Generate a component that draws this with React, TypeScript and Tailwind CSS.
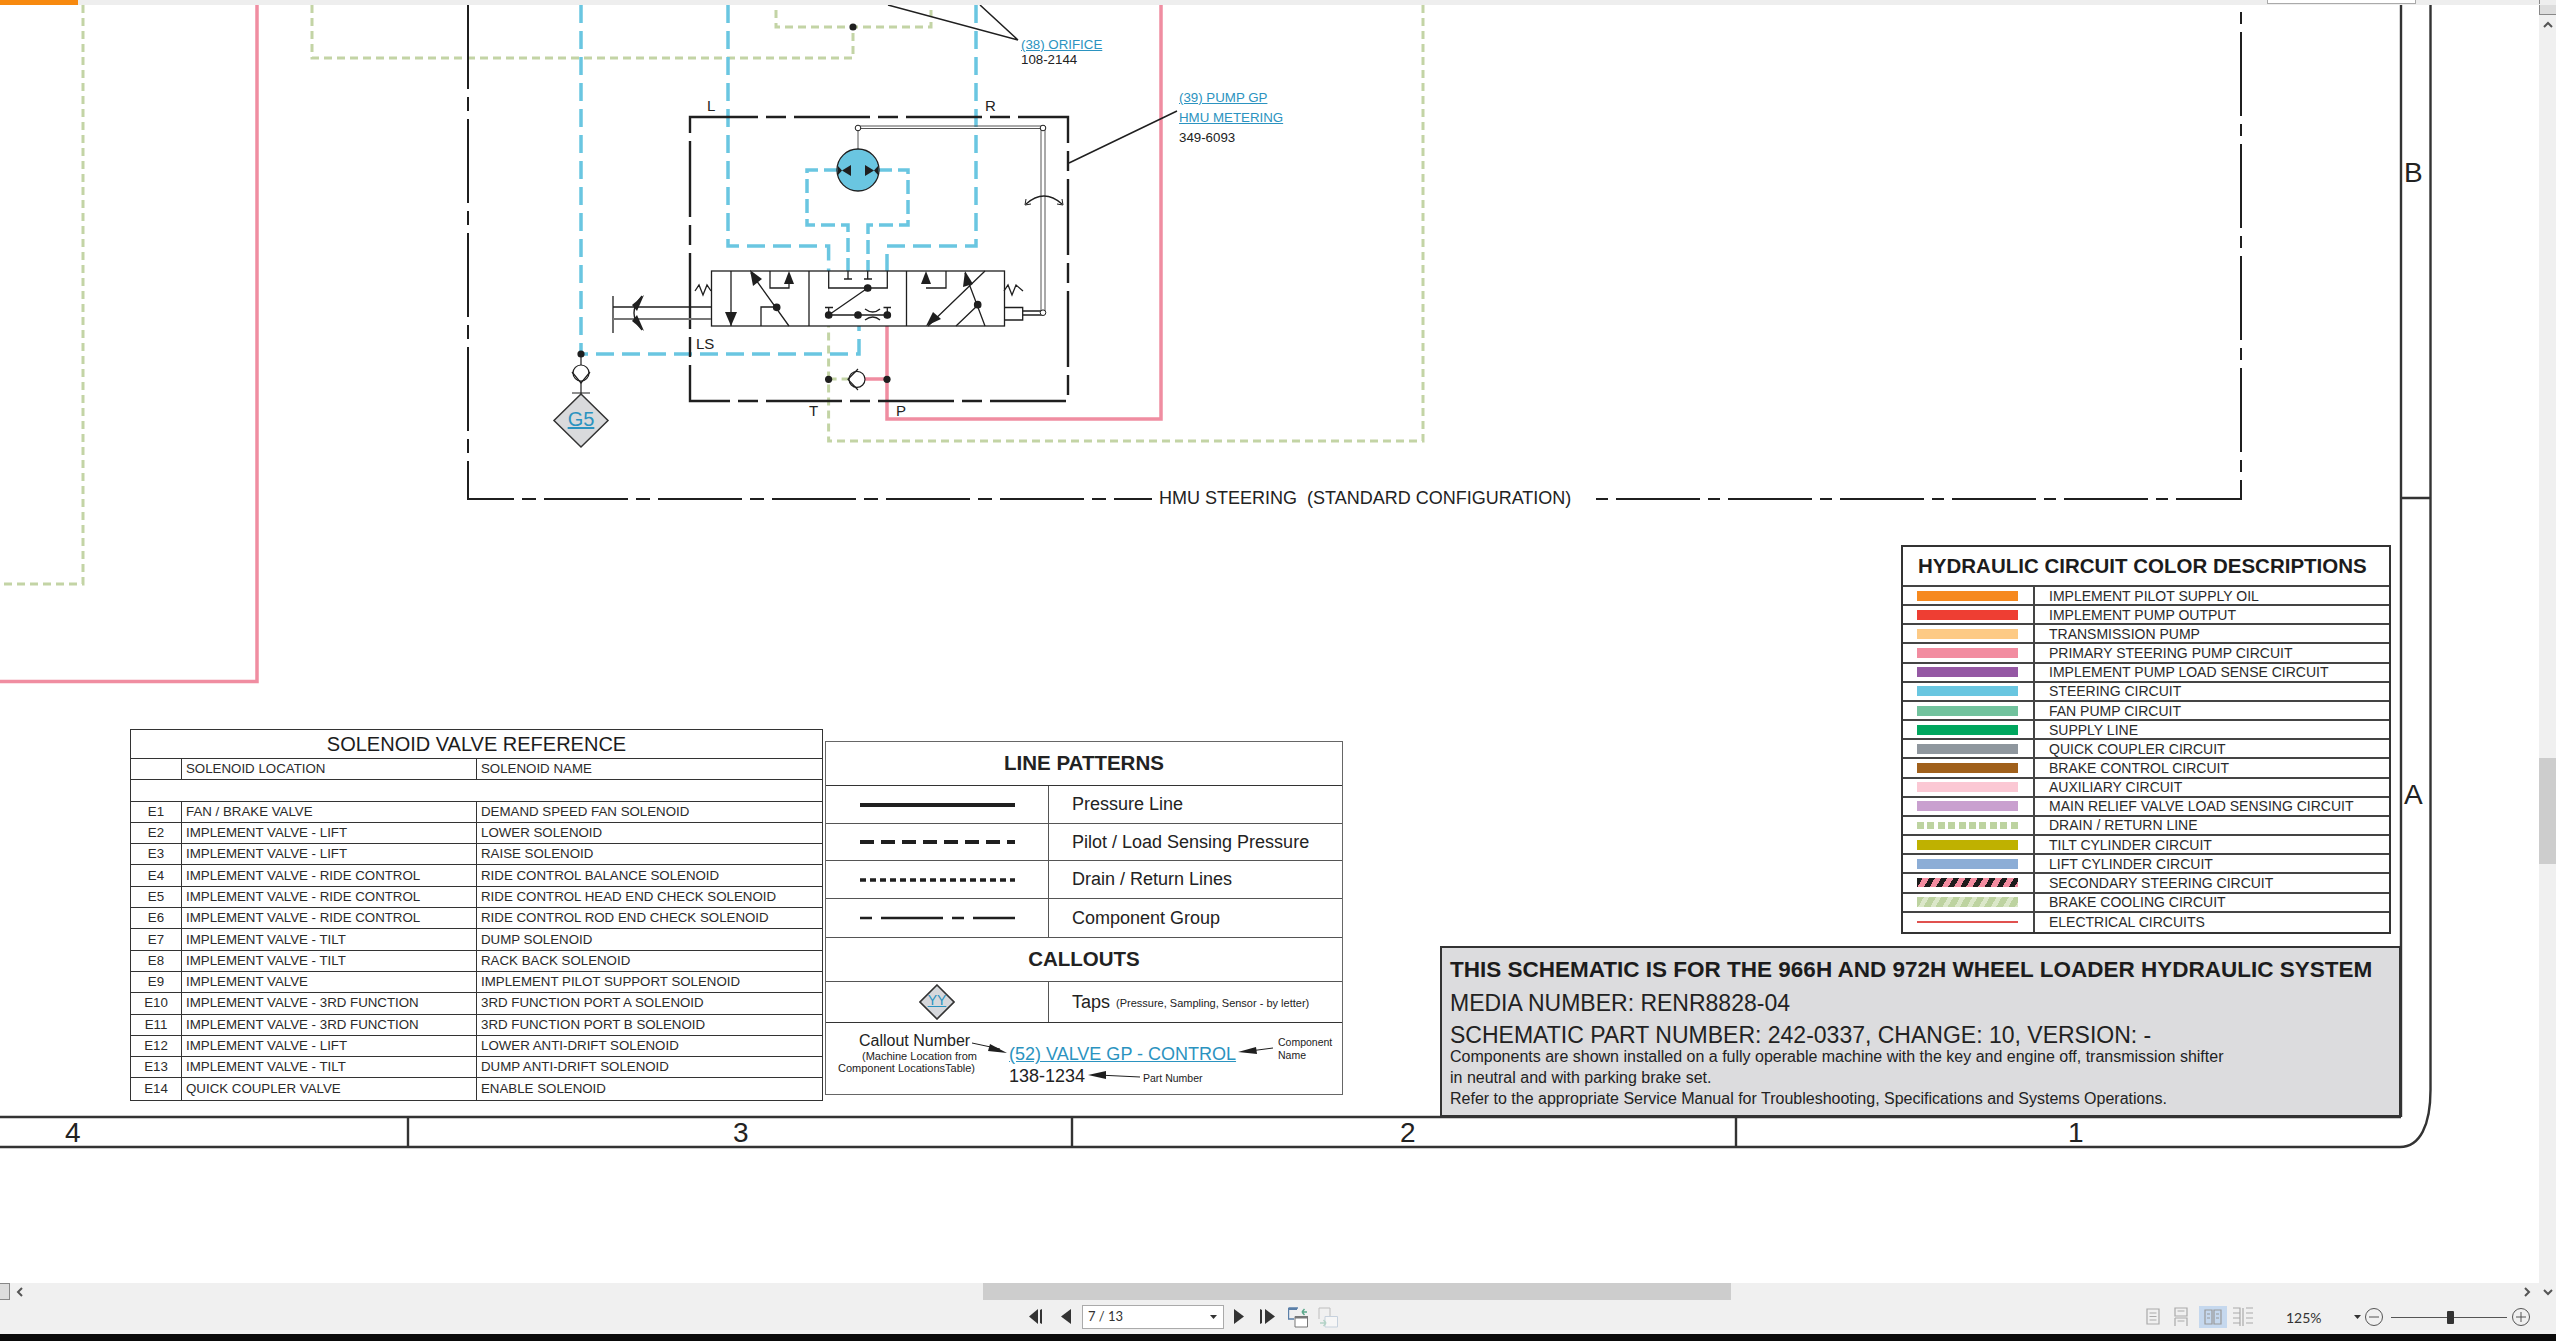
const FONT = "font-['Liberation_Sans',Arial,sans-serif]";

const solenoids = [
  ['E1', 'FAN / BRAKE VALVE', 'DEMAND SPEED FAN SOLENOID'],
  ['E2', 'IMPLEMENT VALVE - LIFT', 'LOWER SOLENOID'],
  ['E3', 'IMPLEMENT VALVE - LIFT', 'RAISE SOLENOID'],
  ['E4', 'IMPLEMENT VALVE - RIDE CONTROL', 'RIDE CONTROL BALANCE SOLENOID'],
  ['E5', 'IMPLEMENT VALVE - RIDE CONTROL', 'RIDE CONTROL HEAD END CHECK SOLENOID'],
  ['E6', 'IMPLEMENT VALVE - RIDE CONTROL', 'RIDE CONTROL ROD END CHECK SOLENOID'],
  ['E7', 'IMPLEMENT VALVE - TILT', 'DUMP SOLENOID'],
  ['E8', 'IMPLEMENT VALVE - TILT', 'RACK BACK SOLENOID'],
  ['E9', 'IMPLEMENT VALVE', 'IMPLEMENT PILOT SUPPORT SOLENOID'],
  ['E10', 'IMPLEMENT VALVE - 3RD FUNCTION', '3RD FUNCTION PORT A SOLENOID'],
  ['E11', 'IMPLEMENT VALVE - 3RD FUNCTION', '3RD FUNCTION PORT B SOLENOID'],
  ['E12', 'IMPLEMENT VALVE - LIFT', 'LOWER ANTI-DRIFT SOLENOID'],
  ['E13', 'IMPLEMENT VALVE - TILT', 'DUMP ANTI-DRIFT SOLENOID'],
  ['E14', 'QUICK COUPLER VALVE', 'ENABLE SOLENOID'],
];

const circuits = [
  ['IMPLEMENT PILOT SUPPLY OIL', 'h-[10px] bg-[#f6891f]'],
  ['IMPLEMENT PUMP OUTPUT', 'h-[10px] bg-[#ee3e33]'],
  ['TRANSMISSION PUMP', 'h-[10px] bg-[#fdca85]'],
  ['PRIMARY STEERING PUMP CIRCUIT', 'h-[10px] bg-[#f28ca0]'],
  ['IMPLEMENT PUMP LOAD SENSE CIRCUIT', 'h-[10px] bg-[#9558a4]'],
  ['STEERING CIRCUIT', 'h-[10px] bg-[#69c6e0]'],
  ['FAN PUMP CIRCUIT', 'h-[10px] bg-[#71c29d]'],
  ['SUPPLY LINE', 'h-[10px] bg-[#00a65e]'],
  ['QUICK COUPLER CIRCUIT', 'h-[10px] bg-[#8f979e]'],
  ['BRAKE CONTROL CIRCUIT', 'h-[10px] bg-[#a0601b]'],
  ['AUXILIARY CIRCUIT', 'h-[10px] bg-[#fbc8d4]'],
  ['MAIN RELIEF VALVE LOAD SENSING CIRCUIT', 'h-[10px] bg-[#c9a0cf]'],
  ['DRAIN / RETURN LINE', 'h-[7px] bg-[repeating-linear-gradient(90deg,#bdd3a0_0_7px,transparent_7px_10.4px)]'],
  ['TILT CYLINDER CIRCUIT', 'h-[10px] bg-[#bfb100]'],
  ['LIFT CYLINDER CIRCUIT', 'h-[10px] bg-[#8cadd6]'],
  ['SECONDARY STEERING CIRCUIT', 'h-[9px] bg-[repeating-linear-gradient(120deg,#1c1c1c_0_5px,#f28ca0_5px_10.5px)]'],
  ['BRAKE COOLING CIRCUIT', 'h-[10px] bg-[repeating-linear-gradient(120deg,#bdd3a0_0_6px,#dbe7c9_6px_10.5px)]'],
  ['ELECTRICAL CIRCUITS', 'h-[2px] bg-[#e0514f]'],
];

const BLUE = '#6ac6e1';
const GREEN = '#c3d4a5';
const PINK = '#f08da1';
const INK = '#1f1f1f';

function Wire({ d, color, w = 3.5, dash }: { d: string; color: string; w?: number; dash?: string }) {
  return <path d={d} fill="none" stroke={color} strokeWidth={w} strokeDasharray={dash} />;
}

function Dot({ x, y, r = 3.6 }: { x: number; y: number; r?: number }) {
  return <circle cx={x} cy={y} r={r} fill={INK} />;
}

function Open({ x, y }: { x: number; y: number }) {
  return <circle cx={x} cy={y} r={2.8} fill="#fff" stroke={INK} strokeWidth={1} />;
}

function ValveSymbol() {
  return (
    <g fill="none" stroke={INK} strokeWidth={1.3}>
      {/* body */}
      <rect x={711.5} y={271} width={293} height={55} fill="#fff" />
      <path d="M809 271V326M906.5 271V326" />
      {/* left cell */}
      <path d="M731 271V326M751 273L789 326M777 307H761V326M770 271V288H789V280" />
      <polygon points="725,312 737,312 731,326" fill={INK} stroke="none" />
      <polygon points="750,270 762,279 753,286" fill={INK} stroke="none" />
      <polygon points="789,271 794,284 784,284" fill={INK} stroke="none" />
      <Dot x={776.7} y={307.3} r={3.2} />
      {/* middle cell */}
      <path d="M828.7 271V288H887.3V271M848 271V279M844 279H852M867.7 271V279M864 279H872M867.7 288L828.7 315M828.7 308V315M825 307.5H833M887.3 308V315M883.5 307.5H891M828.7 315H887" />
      <path d="M865 309Q873 315 880 309M865 320Q873 314 880 320" />
      <Dot x={867.7} y={288} r={3.2} />
      <Dot x={828.7} y={315} r={3.2} />
      <Dot x={858} y={315} r={3.2} />
      <Dot x={887.3} y={315} r={3.2} />
      {/* right cell */}
      <path d="M946 271V288H926M985 271L928 326M965 273L985 326M978 305L956 326" />
      <polygon points="926,271 931,284 921,284" fill={INK} stroke="none" />
      <polygon points="926,326 933,312 941,319" fill={INK} stroke="none" />
      <polygon points="965,271 973,284 963,287" fill={INK} stroke="none" />
      <Dot x={977.7} y={304.7} r={3.2} />
      {/* springs */}
      <path d="M695 291L699 285L703 295L707 285L711 291M1004 291L1008 285L1012 295L1016 285L1023 291" />
      {/* right actuator */}
      <path d="M1004 307.5H1022.7V320H1004M1022.7 311H1043M1022.7 315H1043" />
      <path d="M1041 312.7V128.5H858V150M1045 312.7V126H860" stroke="#555" strokeWidth={1} />
      <Open x={1043} y={312.7} />
      <Open x={1043} y={128} />
      <Open x={858} y={128} />
      <path d="M1026 204Q1044 188 1062 204" />
      <path d="M1026 199L1025 205L1031 204M1062 199L1063 205L1057 204" strokeWidth={1} />
      {/* left actuator */}
      <path d="M613 296V333M613 307H711" />
      <path d="M613 319H711" stroke="#777" strokeWidth={2} />
      <path d="M642 296Q626 313 642 330" />
      <polygon points="644,295 637,311 632,305" fill={INK} stroke="none" />
      <polygon points="644,331 637,315 632,321" fill={INK} stroke="none" />
      {/* motor */}
      <circle cx={858} cy={170} r={21} fill={BLUE} stroke={INK} />
      <polygon points="838,166 838,175 842,170.5" fill={INK} stroke="none" />
      <polygon points="851,165 851,176 842,170.5" fill={INK} stroke="none" />
      <polygon points="865,165 865,176 874,170.5" fill={INK} stroke="none" />
      <polygon points="878,166 878,175 874,170.5" fill={INK} stroke="none" />
    </g>
  );
}

function Schematic() {
  return (
    <svg className="absolute inset-0 h-full w-full" viewBox="0 5 2539 1278">
      {/* drain lines */}
      <Wire d="M83 5V584H0" color={GREEN} w={3} dash="8 5" />
      <Wire d="M312 5V58H853V27" color={GREEN} w={3} dash="8 5" />
      <Wire d="M776 10V27H931V10" color={GREEN} w={3} dash="8 5" />
      <Wire d="M1423 5V441H828.6V326" color={GREEN} w={3} dash="8 5" />
      <Wire d="M828.6 379H850" color={GREEN} w={3} dash="8 5" />
      <Dot x={853} y={27} />
      {/* pressure lines */}
      <Wire d="M257 5V681.5H0" color={PINK} />
      <Wire d="M1161 5V419H887V326" color={PINK} />
      <Wire d="M887 379H865" color={PINK} />
      {/* steering lines */}
      <Wire d="M581 5V354H859V326" color={BLUE} dash="18 8" />
      <Wire d="M728 5V246H828.6V271" color={BLUE} dash="18 8" />
      <Wire d="M976 5V246H887V271" color={BLUE} dash="18 8" />
      <Wire d="M838 170H807V225H848V271" color={BLUE} dash="14 6" />
      <Wire d="M878 170H908V225H868V271" color={BLUE} dash="14 6" />
      {/* group outlines */}
      <Wire d="M468 5V499H1152" color={INK} w={2} dash="84 8 14 8" />
      <Wire d="M1596 499H2241V5" color={INK} w={2} dash="12 8 84 8" />
      <Wire d="M690 125V117H1068V401H690V125" color={INK} w={2.4} dash="76 8 20 8" />
      <ValveSymbol />
      {/* tap G5 */}
      <g fill="none" stroke={INK} strokeWidth={1.2}>
        <path d="M581 354V365M581 381V394M572 393H590" />
        <circle cx={581} cy={373} r={8} fill="#fff" />
        <path d="M572 372L581 383L590 372" />
        <polygon points="581,394 608,420.5 581,447 554,420.5" fill="#d9dadc" stroke="#333" strokeWidth={1.5} />
      </g>
      <Dot x={581} y={354} />
      {/* check valve */}
      <g fill="none" stroke={INK} strokeWidth={1.2}>
        <circle cx={857} cy={379.3} r={8} fill="#fff" />
        <path d="M858 369L848 379.3L858 390" />
      </g>
      <Dot x={828.6} y={379.3} />
      <Dot x={887} y={379.3} />
      {/* leaders */}
      <path d="M888 5L1018 40M980 5L1018 40M1069 163L1177 111" fill="none" stroke={INK} strokeWidth={1.5} />
      {/* sheet frame */}
      <path d="M2401 5V1117M2430.5 5V1090C2430.5 1125 2420 1147 2400 1147H0M0 1117H2401M408 1117V1147M1072 1117V1147M1736 1117V1147M2401 498H2430" fill="none" stroke="#333" strokeWidth={2.4} />
      {/* callout arrows */}
      <g fill="none" stroke={INK} strokeWidth={1}>
        <path d="M972 1043L1000 1049M1273 1048L1250 1051M1140 1077L1098 1075" />
      </g>
      <polygon points="1007,1053 988,1051 990,1044" fill={INK} />
      <polygon points="1238,1052 1256,1047 1257,1054" fill={INK} />
      <polygon points="1088,1075 1106,1071 1106,1079" fill={INK} />
    </svg>
  );
}

function Label({ className, children }: { className: string; children: React.ReactNode }) {
  return <div className={`absolute whitespace-nowrap leading-none ${className}`}>{children}</div>;
}

function SolenoidTable() {
  const row = 'flex h-[21.3px] items-center border-b border-[#333]';
  const cell = 'flex h-full items-center border-l border-[#333] pl-[4px]';
  return (
    <div className="absolute left-[130px] top-[724px] w-[693px] border border-[#333] text-[13.3px] text-[#2a2a2a]">
      <div className="flex h-[29px] items-center justify-center border-b border-[#333] text-[20px] text-[#1c1c1c]">
        SOLENOID VALVE REFERENCE
      </div>
      <div className={row}>
        <div className="w-[50px]" />
        <div className={`${cell} w-[295px]`}>SOLENOID LOCATION</div>
        <div className={`${cell} flex-1`}>SOLENOID NAME</div>
      </div>
      <div className={row} />
      {solenoids.map(([id, loc, name], i) => (
        <div key={id} className={i === solenoids.length - 1 ? 'flex h-[21.3px] items-center' : row}>
          <div className="w-[50px] text-center">{id}</div>
          <div className={`${cell} w-[295px]`}>{loc}</div>
          <div className={`${cell} flex-1`}>{name}</div>
        </div>
      ))}
    </div>
  );
}

function Sample({ h, dash }: { h: number; dash?: string }) {
  return (
    <svg className="h-[6px] w-[155px]" viewBox="0 0 155 6">
      <line x1="0" y1="3" x2="155" y2="3" stroke={INK} strokeWidth={h} strokeDasharray={dash} />
    </svg>
  );
}

function LineRow({ label, h, sample }: { label: string; h: string; sample: React.ReactNode }) {
  return (
    <div className={`flex ${h} items-center border-b border-[#555]`}>
      <div className="flex h-full w-[223px] items-center justify-center border-r border-[#555]">{sample}</div>
      <div className="pl-[23px] text-[18px]">{label}</div>
    </div>
  );
}

function LinePatterns() {
  return (
    <div className="absolute left-[825px] top-[736px] h-[354px] w-[518px] border border-[#666] text-[#222]">
      <div className="flex h-[44px] items-center justify-center border-b border-[#333] text-[20.5px] font-bold">LINE PATTERNS</div>
      <LineRow label="Pressure Line" h="h-[38px]" sample={<Sample h={4} />} />
      <LineRow label="Pilot / Load Sensing Pressure" h="h-[37px]" sample={<Sample h={4} dash="14 7" />} />
      <LineRow label="Drain / Return Lines" h="h-[38px]" sample={<Sample h={3.5} dash="6 4" />} />
      <LineRow label="Component Group" h="h-[39px]" sample={<Sample h={2.5} dash="12 9 62 9" />} />
      <div className="flex h-[44px] items-center justify-center border-b border-[#555] text-[20.5px] font-bold">CALLOUTS</div>
      <div className="flex h-[41px] items-center border-b border-[#333]">
        <div className="flex h-full w-[223px] items-center justify-center border-r border-[#555]">
          <svg className="h-[36px] w-[36px]" viewBox="0 0 36 36">
            <polygon points="18,1 35,18 18,35 1,18" fill="#d6d8dc" stroke="#333" strokeWidth={1.6} />
          </svg>
        </div>
        <div className="pl-[23px] text-[18px]">Taps</div>
        <div className="pl-[6px] pt-[3px] text-[11px]">(Pressure, Sampling, Sensor - by letter)</div>
      </div>
      <Label className="left-[111px] top-[251px] -translate-x-1/2 text-[14px] font-normal text-[#2b93c0] underline">YY</Label>
      <Label className="left-[33px] top-[291px] text-[16px]">Callout Number</Label>
      <Label className="left-[36px] top-[309px] text-[11px]">(Machine Location from</Label>
      <Label className="left-[12px] top-[321px] text-[11px]">Component LocationsTable)</Label>
      <Label className="left-[183px] top-[303px] text-[18px] text-[#2b93c0] underline">(52) VALVE GP - CONTROL</Label>
      <Label className="left-[183px] top-[325px] text-[18px]">138-1234</Label>
      <Label className="left-[452px] top-[295px] text-[10.5px]">Component</Label>
      <Label className="left-[452px] top-[308px] text-[10.5px]">Name</Label>
      <Label className="left-[317px] top-[331px] text-[10.5px]">Part Number</Label>
    </div>
  );
}

function CircuitTable() {
  return (
    <div className="absolute left-[1901px] top-[540px] w-[490px] border-2 border-[#333] text-[14px] text-[#2a2a2a]">
      <div className="flex h-[40px] items-center border-b-2 border-[#444] pl-[15px] text-[20.5px] font-bold text-[#1c1c1c]">
        HYDRAULIC CIRCUIT COLOR DESCRIPTIONS
      </div>
      {circuits.map(([name, swatch], i) => (
        <div key={name} className={`flex h-[19.17px] items-center ${i === circuits.length - 1 ? '' : 'border-b-2 border-[#444]'}`}>
          <div className="flex h-full w-[132px] items-center border-r-2 border-[#444] pl-[14px]">
            <div className={`w-[101px] ${swatch}`} />
          </div>
          <div className="pl-[14px] leading-none">{name}</div>
        </div>
      ))}
    </div>
  );
}

function NoteBox() {
  return (
    <div className="absolute left-[1440px] top-[941px] flex h-[171px] w-[961px] flex-col border-2 border-[#333] bg-[#dcdcde] pl-[8px] pt-[9px] text-[#222]">
      <div className="h-[33px] text-[22.5px] leading-[26px] font-bold whitespace-nowrap text-[#1c1c1c]">THIS SCHEMATIC IS FOR THE 966H AND 972H WHEEL LOADER HYDRAULIC SYSTEM</div>
      <div className="h-[32px] text-[23px] leading-[27px]">MEDIA NUMBER: RENR8828-04</div>
      <div className="h-[26px] text-[23px] leading-[26px] whitespace-nowrap">SCHEMATIC PART NUMBER: 242-0337, CHANGE: 10, VERSION: -</div>
      <div className="h-[21px] text-[16px] leading-[18px]">Components are shown installed on a fully operable machine with the key and engine off, transmission shifter</div>
      <div className="h-[21px] text-[16px] leading-[18px]">in neutral and with parking brake set.</div>
      <div className="text-[16px] leading-[18px]">Refer to the appropriate Service Manual for Troubleshooting, Specifications and Systems Operations.</div>
    </div>
  );
}

function Canvas() {
  return (
    <div className={`relative flex-1 overflow-hidden bg-white text-[#222] ${FONT}`}>
      <Schematic />
      <Label className="left-[1021px] top-[33px] text-[13.3px] text-[#2b93c0] underline">(38) ORIFICE</Label>
      <Label className="left-[1021px] top-[48px] text-[13.3px]">108-2144</Label>
      <Label className="left-[1179px] top-[86px] text-[13.3px] text-[#2b93c0] underline">(39) PUMP GP</Label>
      <Label className="left-[1179px] top-[106px] text-[13.3px] text-[#2b93c0] underline">HMU METERING</Label>
      <Label className="left-[1179px] top-[126px] text-[13.3px]">349-6093</Label>
      <Label className="left-[707px] top-[93px] text-[15px]">L</Label>
      <Label className="left-[985px] top-[93px] text-[15px]">R</Label>
      <Label className="left-[696px] top-[331px] text-[15px]">LS</Label>
      <Label className="left-[809px] top-[398px] text-[15px]">T</Label>
      <Label className="left-[896px] top-[398px] text-[15px]">P</Label>
      <Label className="left-[581px] top-[404px] -translate-x-1/2 text-[20px] text-[#2b93c0] underline">G5</Label>
      <Label className="left-[1159px] top-[484px] text-[18px] whitespace-pre">HMU STEERING  (STANDARD CONFIGURATION)</Label>
      <Label className="left-[2404px] top-[154px] text-[28px]">B</Label>
      <Label className="left-[2404px] top-[776px] text-[28px]">A</Label>
      <Label className="left-[65px] top-[1114px] text-[28px]">4</Label>
      <Label className="left-[733px] top-[1114px] text-[28px]">3</Label>
      <Label className="left-[1400px] top-[1114px] text-[28px]">2</Label>
      <Label className="left-[2068px] top-[1114px] text-[28px]">1</Label>
      <SolenoidTable />
      <LinePatterns />
      <CircuitTable />
      <NoteBox />
    </div>
  );
}

function Chevron({ d }: { d: string }) {
  return (
    <svg className="h-[12px] w-[12px]" viewBox="0 0 12 12">
      <path d={d} fill="none" stroke="#555" strokeWidth={2} />
    </svg>
  );
}

function Toolbar() {
  return (
    <div className={`flex h-[34px] items-center bg-[#f0f0f0] text-[#333] ${FONT}`}>
      <svg className="ml-[1029px] h-[18px] w-[16px]" viewBox="0 0 16 18">
        <polygon points="9,1 9,16 0,8.5" fill="#333" />
        <path d="M11 2L13 1V16L11 15Z" fill="#333" />
      </svg>
      <svg className="ml-[16px] h-[18px] w-[10px]" viewBox="0 0 10 18">
        <polygon points="10,1 10,16 0,8.5" fill="#333" />
      </svg>
      <div className="ml-[11px] flex h-[24px] w-[142px] items-center justify-between border border-[#aaa] bg-white pl-[5px] pr-[6px] text-[13px] font-['Lato',sans-serif]">
        <span>7 / 13</span>
        <svg className="h-[4px] w-[7px]" viewBox="0 0 7 4">
          <polygon points="0,0 7,0 3.5,4" fill="#333" />
        </svg>
      </div>
      <svg className="ml-[10px] h-[18px] w-[10px]" viewBox="0 0 10 18">
        <polygon points="0,1 0,16 10,8.5" fill="#333" />
      </svg>
      <svg className="ml-[16px] h-[18px] w-[16px]" viewBox="0 0 16 18">
        <path d="M0 1L2 2V15L0 16Z" fill="#333" />
        <polygon points="5,1 5,16 15,8.5" fill="#333" />
      </svg>
      <svg className="ml-[12px] h-[21px] w-[20px]" viewBox="0 0 20 21">
        <path d="M.5 1H10M.5 1V12H6" fill="none" stroke="#5a7fa8" strokeWidth={1.4} />
        <path d="M1 1H9V3H1Z" fill="#5a7fa8" />
        <path d="M7 9.5H19.5V20H7Z" fill="#fff" stroke="#777" />
        <path d="M7 9H20V11.5H7Z" fill="#777" />
        <path d="M14 5H19M14 5L16.5 2M14 5L16.5 8" fill="none" stroke="#5aa88a" strokeWidth={1.4} />
      </svg>
      <svg className="ml-[10px] h-[21px] w-[20px] opacity-40" viewBox="0 0 20 21">
        <path d="M1 1H12V9M1 1V12" fill="none" stroke="#777" />
        <path d="M7 9.5H19.5V20H7Z" fill="#fff" stroke="#8aa5c2" />
        <path d="M2 16H8M8 16L5.5 13M8 16L5.5 19" fill="none" stroke="#5aa88a" strokeWidth={1.4} />
      </svg>
      <svg className="ml-[808px] h-[22px] w-[107px]" viewBox="0 0 107 22" fill="none" stroke="#aaa" strokeWidth={1.2}>
        <path d="M1 3H13V18H1ZM3.5 7H10.5M3.5 10.5H10.5M3.5 14H10.5" />
        <path d="M29 2H41V10H29ZM29 12H41V20M29 20V12M31.5 5H38.5M31.5 15H38.5" />
        <rect x={53} y={0} width={28} height={22} fill="#c5d8ee" stroke="none" />
        <path d="M59 4H66V18H59ZM68 4H75V18H68ZM61 8H64M61 12H64M70 8H73M70 12H73" stroke="#999" />
        <path d="M87 2H94V20M100 2H107M97 2V20M87 7H94M87 12H94M87 17H94M100 7H107M100 12H107M100 17H107" />
      </svg>
      <span className="ml-[33px] text-[14px] font-['Lato',sans-serif]">125%</span>
      <svg className="ml-[32px] h-[4px] w-[7px]" viewBox="0 0 7 4">
        <polygon points="0,0 7,0 3.5,4" fill="#333" />
      </svg>
      <svg className="ml-[3px] h-[20px] w-[20px]" viewBox="0 0 20 20" fill="none" stroke="#555">
        <circle cx={10} cy={10} r={8.5} />
        <path d="M5 10H15" />
      </svg>
      <div className="relative ml-[7px] h-px w-[116px] bg-[#555]">
        <div className="absolute left-[56px] top-[-6px] h-[13px] w-[7px] rounded-[1px] bg-[#333]" />
      </div>
      <svg className="ml-[4px] h-[20px] w-[20px]" viewBox="0 0 20 20" fill="none" stroke="#555">
        <circle cx={10} cy={10} r={8.5} />
        <path d="M5 10H15M10 5V15" />
      </svg>
    </div>
  );
}

export default function App() {
  return (
    <div className="flex h-[1341px] w-[2556px] flex-col overflow-hidden bg-white">
      <div className="flex h-[5px] shrink-0 bg-[#eeeeee]">
        <div className="h-full w-[78px] bg-[#f7890f]" />
        <div className="ml-[2189px] h-[4px] w-[149px] border-x border-b border-[#aaa] bg-white" />
        <div className="ml-auto h-[4px] w-[17px] border-l border-[#888]" />
      </div>
      <div className="flex min-h-0 flex-1">
        <Canvas />
        <div className="relative flex w-[17px] flex-col items-center bg-[#f0f0f0]">
          <div className="h-[10px] w-full border-b border-l border-[#888] bg-[#dddddd]" />
          <div className="mt-[4px]">
            <Chevron d="M2 8L6 4L10 8" />
          </div>
          <div className="absolute left-0 top-[753px] h-[106px] w-full bg-[#cdcdcd]" />
        </div>
      </div>
      <div className="flex h-[17px] shrink-0 items-center bg-[#f0f0f0]">
        <div className="h-full w-[10px] border-y border-r border-[#888] bg-[#dddddd]" />
        <div className="ml-[4px]">
          <Chevron d="M8 2L4 6L8 10" />
        </div>
        <div className="ml-[957px] h-full w-[748px] bg-[#cdcdcd]" />
        <div className="ml-[790px]">
          <Chevron d="M4 2L8 6L4 10" />
        </div>
        <div className="ml-[9px]">
          <Chevron d="M2 4L6 8L10 4" />
        </div>
      </div>
      <Toolbar />
      <div className="h-[7px] shrink-0 bg-[#0a0a0a]" />
    </div>
  );
}
